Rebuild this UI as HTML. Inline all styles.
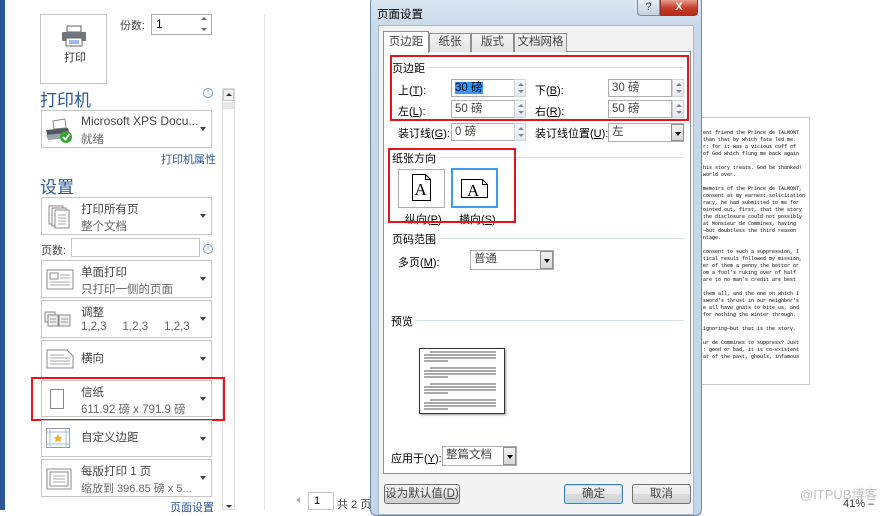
<!DOCTYPE html>
<html><head><meta charset="utf-8">
<style>
*{margin:0;padding:0;box-sizing:border-box}
body{width:889px;height:510px;overflow:hidden;background:#fff;position:relative;font-family:"Liberation Sans","Noto Sans CJK SC",sans-serif;font-size:11px;color:#444}
.a{position:absolute}
.dd{position:absolute;left:41px;width:171px;border:1px solid #c6c6c6;background:#fff}
.dd .t1{position:absolute;left:39px;top:3px;font-size:11.5px;color:#444}
.dd .t2{position:absolute;left:39px;top:20px;font-size:11.5px;color:#666}
.dd .ar{position:absolute;right:5px;top:50%;margin-top:-2px;border-left:3px solid transparent;border-right:3px solid transparent;border-top:4px solid #444}
.h{position:absolute;color:#2b5797;font-size:17px}
.info{position:absolute;width:10px;height:10px;border:1px solid #6a9ad0;border-radius:50%;font-size:7px;color:#6a9ad0;text-align:center;line-height:8px}
.dlg{font-size:11px;color:#000}
.inp{position:absolute;background:#fff;border:1px solid #abadb3;font-size:11.5px;padding-left:3px;line-height:16px}
.spin{position:absolute;width:12px;border:1px solid #d0d4da;background:linear-gradient(#f7f8fa,#e6e9ee)}
.spin:before,.spin:after{content:"";position:absolute;left:3px;border-left:3px solid transparent;border-right:3px solid transparent}
.spin:before{top:3px;border-bottom:3px solid #7a8a9c}
.spin:after{bottom:3px;border-top:3px solid #7a8a9c}
.cb{position:absolute;width:13px;border:1px solid #8e8f8f;background:linear-gradient(#f2f2f2,#d8d8d8)}
.cb:after{content:"";position:absolute;left:3px;top:50%;margin-top:-1px;border-left:3px solid transparent;border-right:3px solid transparent;border-top:4px solid #000}
.gl{position:absolute;height:1px;background:#d5dfe5}
.red{position:absolute;border:2px solid #e8141c}
.tab{position:absolute;top:33px;height:19px;border:1px solid #8e8f8f;border-bottom:none;background:linear-gradient(#f5f5f5,#e3e3e3);text-align:center;line-height:17px;font-size:11.5px}
.btn{position:absolute;height:20px;border:1px solid #707070;border-radius:3px;background:linear-gradient(#f2f2f2,#ebebeb 50%,#dddddd 50%,#cfcfcf);text-align:center;line-height:18px;font-size:11.5px}
.doc{position:absolute;left:703px;font-family:"Liberation Mono",monospace;font-size:5px;color:#000;white-space:nowrap;line-height:7px}
</style></head><body>
<div class="a" style="left:0;top:0;width:5px;height:510px;background:#2b579a"></div>
<div class="a" style="left:40px;top:14px;width:67px;height:70px;border:1px solid #c6c6c6;background:#fff"></div>
<svg class="a" style="left:61px;top:25px" width="26" height="22" viewBox="0 0 26 22"><rect x="6" y="1" width="14" height="6" fill="#fff" stroke="#666"/><rect x="1" y="7" width="24" height="9" rx="1" fill="#6f7680"/><rect x="5" y="13" width="16" height="8" fill="#fff" stroke="#666"/><line x1="8" y1="16" x2="18" y2="16" stroke="#3a7bd5"/><line x1="8" y1="18" x2="18" y2="18" stroke="#3a7bd5"/></svg>
<div class="a" style="left:64px;top:49px;font-size:11px;color:#333">打印</div>
<div class="a" style="left:120px;top:17px;color:#444">份数:</div>
<div class="a" style="left:151px;top:14px;width:61px;height:21px;border:1px solid #ababab;padding:2px 4px;font-size:12px;color:#000">1</div>
<div class="a" style="left:201px;top:17px;border-left:3px solid transparent;border-right:3px solid transparent;border-bottom:3px solid #666"></div>
<div class="a" style="left:201px;top:28px;border-left:3px solid transparent;border-right:3px solid transparent;border-top:3px solid #666"></div>
<div class="a" style="left:264px;top:14px;width:1px;height:496px;background:#e4e4e4"></div>
<div class="a" style="left:222px;top:88px;width:13px;height:422px;border:1px solid #dadada;background:#fff"></div>
<div class="a" style="left:223px;top:89px;width:11px;height:12px;background:#f0f0f0;border:1px solid #c8c8c8"></div>
<div class="a" style="left:226px;top:93px;border-left:3px solid transparent;border-right:3px solid transparent;border-bottom:3px solid #333"></div>
<div class="a" style="left:223px;top:102px;width:11px;height:7px;background:#e8e8e8"></div>
<div class="a" style="left:226px;top:505px;border-left:3px solid transparent;border-right:3px solid transparent;border-top:3px solid #333"></div>

<div class="h" style="left:40px;top:86px">打印机</div>
<div class="info" style="left:203px;top:88px">i</div>
<div class="dd" style="top:110px;height:38px">
<svg class="a" style="left:2px;top:7px" width="30" height="26" viewBox="0 0 30 26"><path d="M9 3 L21 1 L22 10 L10 11Z" fill="#fff" stroke="#888"/><path d="M2 12 L24 10 L26 18 L4 21Z" fill="#505860"/><path d="M2 17 L22 15 L24 20 L4 22Z" fill="#9aa3ab"/><circle cx="22" cy="19" r="6" fill="#3aa635"/><path d="M19 19 L21.5 21.5 L25.5 16" stroke="#fff" stroke-width="1.8" fill="none"/></svg>
<div class="t1" style="font-size:12px">Microsoft XPS Docu...</div><div class="t2" style="top:20px">就绪</div><div class="ar"></div></div>
<div class="a" style="left:161px;top:151px;color:#2b5797;font-size:11px">打印机属性</div>
<div class="h" style="left:40px;top:173px">设置</div>
<div class="dd" style="top:197px;height:38px">
<svg class="a" style="left:5px;top:6px" width="26" height="26" viewBox="0 0 26 26" fill="#fff" stroke="#888"><rect x="2" y="2" width="14" height="18"/><rect x="5" y="4" width="14" height="18"/><rect x="8" y="6" width="14" height="18"/><path d="M11 11h8M11 14h8M11 17h8M11 20h8" stroke="#aaa"/></svg>
<div class="t1">打印所有页</div><div class="t2">整个文档</div><div class="ar"></div></div>
<div class="a" style="left:41px;top:242px;color:#444">页数:</div>
<div class="a" style="left:71px;top:238px;width:129px;height:19px;border:1px solid #c6c6c6"></div>
<div class="info" style="left:203px;top:244px">i</div>
<div class="dd" style="top:260px;height:38px">
<svg class="a" style="left:4px;top:8px" width="28" height="22" viewBox="0 0 28 22" fill="#fff" stroke="#888"><rect x="1" y="1" width="26" height="19"/><rect x="4" y="4" width="8" height="6"/><path d="M14 6h10M14 9h10M4 13h20M4 16h20" stroke="#aaa"/></svg>
<div class="t1">单面打印</div><div class="t2">只打印一侧的页面</div><div class="ar"></div></div>
<div class="dd" style="top:300px;height:38px">
<svg class="a" style="left:2px;top:10px" width="28" height="16" viewBox="0 0 28 16" fill="#eee" stroke="#888"><rect x="1" y="1" width="10" height="10"/><rect x="4" y="4" width="10" height="11"/><rect x="15" y="4" width="11" height="11"/><path d="M6 8h6M6 11h6M17 8h7M17 11h7" stroke="#999"/></svg>
<div class="t1">调整</div><div class="t2">1,2,3&nbsp;&nbsp;&nbsp;&nbsp;&nbsp;1,2,3&nbsp;&nbsp;&nbsp;&nbsp;&nbsp;1,2,3</div><div class="ar"></div></div>
<div class="dd" style="top:340px;height:38px">
<svg class="a" style="left:4px;top:8px" width="28" height="20" viewBox="0 0 28 20" fill="#fff" stroke="#888"><path d="M1 1h20l6 6v12H1z"/><path d="M4 6h14M4 9h20M4 12h20M4 15h20" stroke="#aaa"/></svg>
<div class="t1" style="top:9px">横向</div><div class="ar"></div></div>
<div class="dd" style="top:380px;height:37px">
<div class="a" style="left:8px;top:8px;width:14px;height:20px;border:1px solid #888"></div>
<div class="t1">信纸</div><div class="t2">611.92 磅 x 791.9 磅</div><div class="ar"></div></div>
<div class="red" style="left:31px;top:377px;width:194px;height:44px"></div>
<div class="dd" style="top:420px;height:37px">
<svg class="a" style="left:4px;top:7px" width="24" height="20" viewBox="0 0 24 20"><rect x="0.5" y="0.5" width="23" height="19" fill="#fff" stroke="#999"/><path d="M0 4h24M0 16h24M4 0v20M20 0v20" stroke="#9cc0e8"/><path d="M12 6l1.5 3 3 .3-2.3 2 .8 3-3-1.6-3 1.6.8-3-2.3-2 3-.3z" fill="#f0b030"/></svg>
<div class="t1" style="top:8px">自定义边距</div><div class="ar"></div></div>
<div class="dd" style="top:459px;height:38px">
<svg class="a" style="left:4px;top:8px" width="26" height="22" viewBox="0 0 26 22" fill="#fff" stroke="#888"><rect x="1" y="1" width="24" height="20"/><rect x="4" y="4" width="18" height="14"/><path d="M7 8h12M7 11h12M7 14h12" stroke="#aaa"/></svg>
<div class="t1">每版打印 1 页</div><div class="t2" style="font-size:11px">缩放到 396.85 磅 x 5...</div><div class="ar"></div></div>
<div class="a" style="left:170px;top:499px;color:#2b5797">页面设置</div>
<div class="a" style="left:296px;top:497px;border-top:3px solid transparent;border-bottom:3px solid transparent;border-right:4px solid #aaa"></div>
<div class="a" style="left:308px;top:492px;width:26px;height:18px;border:1px solid #c6c6c6;padding:2px 5px;color:#000;font-size:11px">1</div>
<div class="a" style="left:337px;top:496px;color:#444">共 2 页</div>

<div class="a" style="left:697px;top:0;width:5px;height:510px;background:linear-gradient(90deg,#a8c4e2,#d7e5f3)"></div>
<div class="a" style="left:702px;top:117px;width:108px;height:268px;border:1px solid #c8c8c8;border-left:none;background:#fff"></div>
<div class="doc" style="top:130px">ent friend the Prince de TALMONT<br>than that by which fate led me.<br>r: for it was a vicious cuff of<br>of God which flung me back again<br><br>his story treats. God be thanked!<br>world over.<br><br>memoirs of the Prince de TALMONT,<br>consent at my earnest solicitation<br>racy, he had submitted to me for<br>ointed out, first, that the story<br>the disclosure could not possibly<br>at Monsieur de Commines, having<br>—but doubtless the third reason<br>ntage.<br><br>consent to such a suppression, I<br>tical result followed my mission,<br>er of them a penny the better or<br>om a fool's ruking over of half<br>are to no man's credit are best<br><br>them all, and the one on which I<br>sword's thrust in our neighbor's<br>e all have gnats to bite us, and<br>for nothing the winter through.<br><br>ignoring—but that is the story.<br><br>ur de Commines to suppress? Just<br>: good or bad, it is co-existent<br>at of the past, ghouls, infamous</div>
<div class="a" style="left:800px;top:484px;color:#c4c4c4;font-size:13px">@ITPUB博客</div>
<div class="a" style="left:843px;top:498px;color:#333;font-size:11px">41% –</div>

<div class="a dlg" style="left:370px;top:-4px;width:332px;height:520px;border:1px solid #6d8aa8;border-radius:6px;background:linear-gradient(#dce7f3,#c9d9ea 30px,#c2d5ea)"></div>
<div class="a" style="left:378px;top:25px;width:316px;height:490px;background:#f3f3f3;border:1px solid #a8b8c8"></div>
<div class="a" style="left:377px;top:6px;font-size:11.5px;color:#000">页面设置</div>
<div class="a" style="left:637px;top:-1px;width:23px;height:17px;border:1px solid #7d8ea0;border-radius:0 0 0 4px;background:linear-gradient(#e8eef5,#c5d2df);text-align:center;font-size:11px;line-height:15px;color:#444">?</div>
<div class="a" style="left:660px;top:-1px;width:38px;height:17px;border:1px solid #8a3a30;border-radius:0 0 4px 0;background:linear-gradient(#e8a090,#c7402e 50%,#b52a18);text-align:center;color:#fff;font-weight:bold;font-size:11px;line-height:15px">X</div>
<div class="a" style="left:383px;top:51px;width:308px;height:423px;background:#fff;border:1px solid #8e8f8f"></div>
<div class="tab" style="left:429px;width:42px">纸张</div>
<div class="tab" style="left:471px;width:43px">版式</div>
<div class="tab" style="left:514px;width:53px">文档网格</div>
<div class="tab" style="left:383px;top:31px;width:46px;height:22px;background:#fff;line-height:21px">页边距</div>
<div class="a dlg" style="left:392px;top:60px">页边距</div><div class="gl" style="left:428px;top:67px;width:256px"></div>
<div class="a dlg" style="left:398px;top:82px">上(<u>T</u>):</div>
<div class="inp" style="left:451px;top:79px;width:64px;height:18px"><span style="background:#3399ff;color:#000">30 磅</span></div><div class="spin" style="left:514px;top:79px;height:18px"></div>
<div class="a dlg" style="left:535px;top:82px">下(<u>B</u>):</div>
<div class="inp" style="left:608px;top:79px;width:64px;height:18px">30 磅</div><div class="spin" style="left:672px;top:79px;height:18px"></div>
<div class="a dlg" style="left:398px;top:103px">左(<u>L</u>):</div>
<div class="inp" style="left:451px;top:100px;width:64px;height:18px">50 磅</div><div class="spin" style="left:514px;top:100px;height:18px"></div>
<div class="a dlg" style="left:535px;top:103px">右(<u>R</u>):</div>
<div class="inp" style="left:608px;top:100px;width:64px;height:18px">50 磅</div><div class="spin" style="left:672px;top:100px;height:18px"></div>
<div class="red" style="left:390px;top:55px;width:299px;height:66px"></div>
<div class="a dlg" style="left:398px;top:125px">装订线(<u>G</u>):</div>
<div class="inp" style="left:451px;top:123px;width:64px;height:18px">0 磅</div><div class="spin" style="left:514px;top:123px;height:18px"></div>
<div class="a dlg" style="left:535px;top:125px">装订线位置(<u>U</u>):</div>
<div class="inp" style="left:608px;top:123px;width:76px;height:19px">左</div><div class="cb" style="left:671px;top:124px;height:17px"></div>
<div class="a dlg" style="left:392px;top:150px">纸张方向</div><div class="gl" style="left:440px;top:157px;width:244px"></div>
<div class="a" style="left:398px;top:169px;width:47px;height:39px;border:1px solid #adadad;background:#fff"></div>
<svg class="a" style="left:412px;top:174px" width="19" height="27" viewBox="0 0 19 27"><path d="M.5 .5h13l5 5v21H.5z" fill="#fff" stroke="#000"/><path d="M13.5 .5v5h5" fill="none" stroke="#000"/><text x="2.5" y="21" font-family="Liberation Serif" font-size="17" fill="#000">A</text></svg>
<div class="a" style="left:451px;top:168px;width:47px;height:40px;border:2px solid #3c9bf0;background:#fff"></div>
<svg class="a" style="left:461px;top:179px" width="27" height="19" viewBox="0 0 27 19"><path d="M.5 .5h21l5 5v13H.5z" fill="#fff" stroke="#000"/><path d="M21.5 .5v5h5" fill="none" stroke="#000"/><text x="6" y="17" font-family="Liberation Serif" font-size="17" fill="#000">A</text></svg>
<div class="a dlg" style="left:405px;top:211px">纵向(<u>P</u>)</div>
<div class="a dlg" style="left:459px;top:211px">横向(<u>S</u>)</div>
<div class="red" style="left:388px;top:148px;width:128px;height:75px"></div>
<div class="a dlg" style="left:392px;top:231px">页码范围</div><div class="gl" style="left:440px;top:238px;width:244px"></div>
<div class="a dlg" style="left:398px;top:254px">多页(<u>M</u>):</div>
<div class="inp" style="left:470px;top:250px;width:84px;height:20px">普通</div><div class="cb" style="left:540px;top:251px;height:18px"></div>
<div class="a dlg" style="left:391px;top:313px">预览</div><div class="gl" style="left:415px;top:320px;width:269px"></div>
<div class="a" style="left:419px;top:348px;width:86px;height:66px;border:1px solid #333;background:#fff;box-shadow:1px 1px 2px #999"></div>
<svg class="a" style="left:424px;top:350px" width="76" height="62" viewBox="0 0 76 62" stroke="#555" stroke-width="1"><path d="M6 2h66M0 5h72M0 8h72M0 11h24M6 18h66M0 21h72M0 24h72M0 27h24M6 34h66M0 37h72M0 40h72M0 43h24M6 50h66M0 53h72M0 56h72M0 59h24"/></svg>
<div class="a dlg" style="left:391px;top:450px">应用于(<u>Y</u>):</div>
<div class="inp" style="left:442px;top:446px;width:75px;height:20px">整篇文档</div><div class="cb" style="left:503px;top:447px;height:18px"></div>
<div class="btn" style="left:384px;top:484px;width:76px">设为默认值(<u>D</u>)</div>
<div class="btn" style="left:564px;top:484px;width:59px;border-color:#3c7fb1;box-shadow:inset 0 0 0 1px #aee0f8">确定</div>
<div class="btn" style="left:632px;top:484px;width:59px">取消</div>
</body></html>
